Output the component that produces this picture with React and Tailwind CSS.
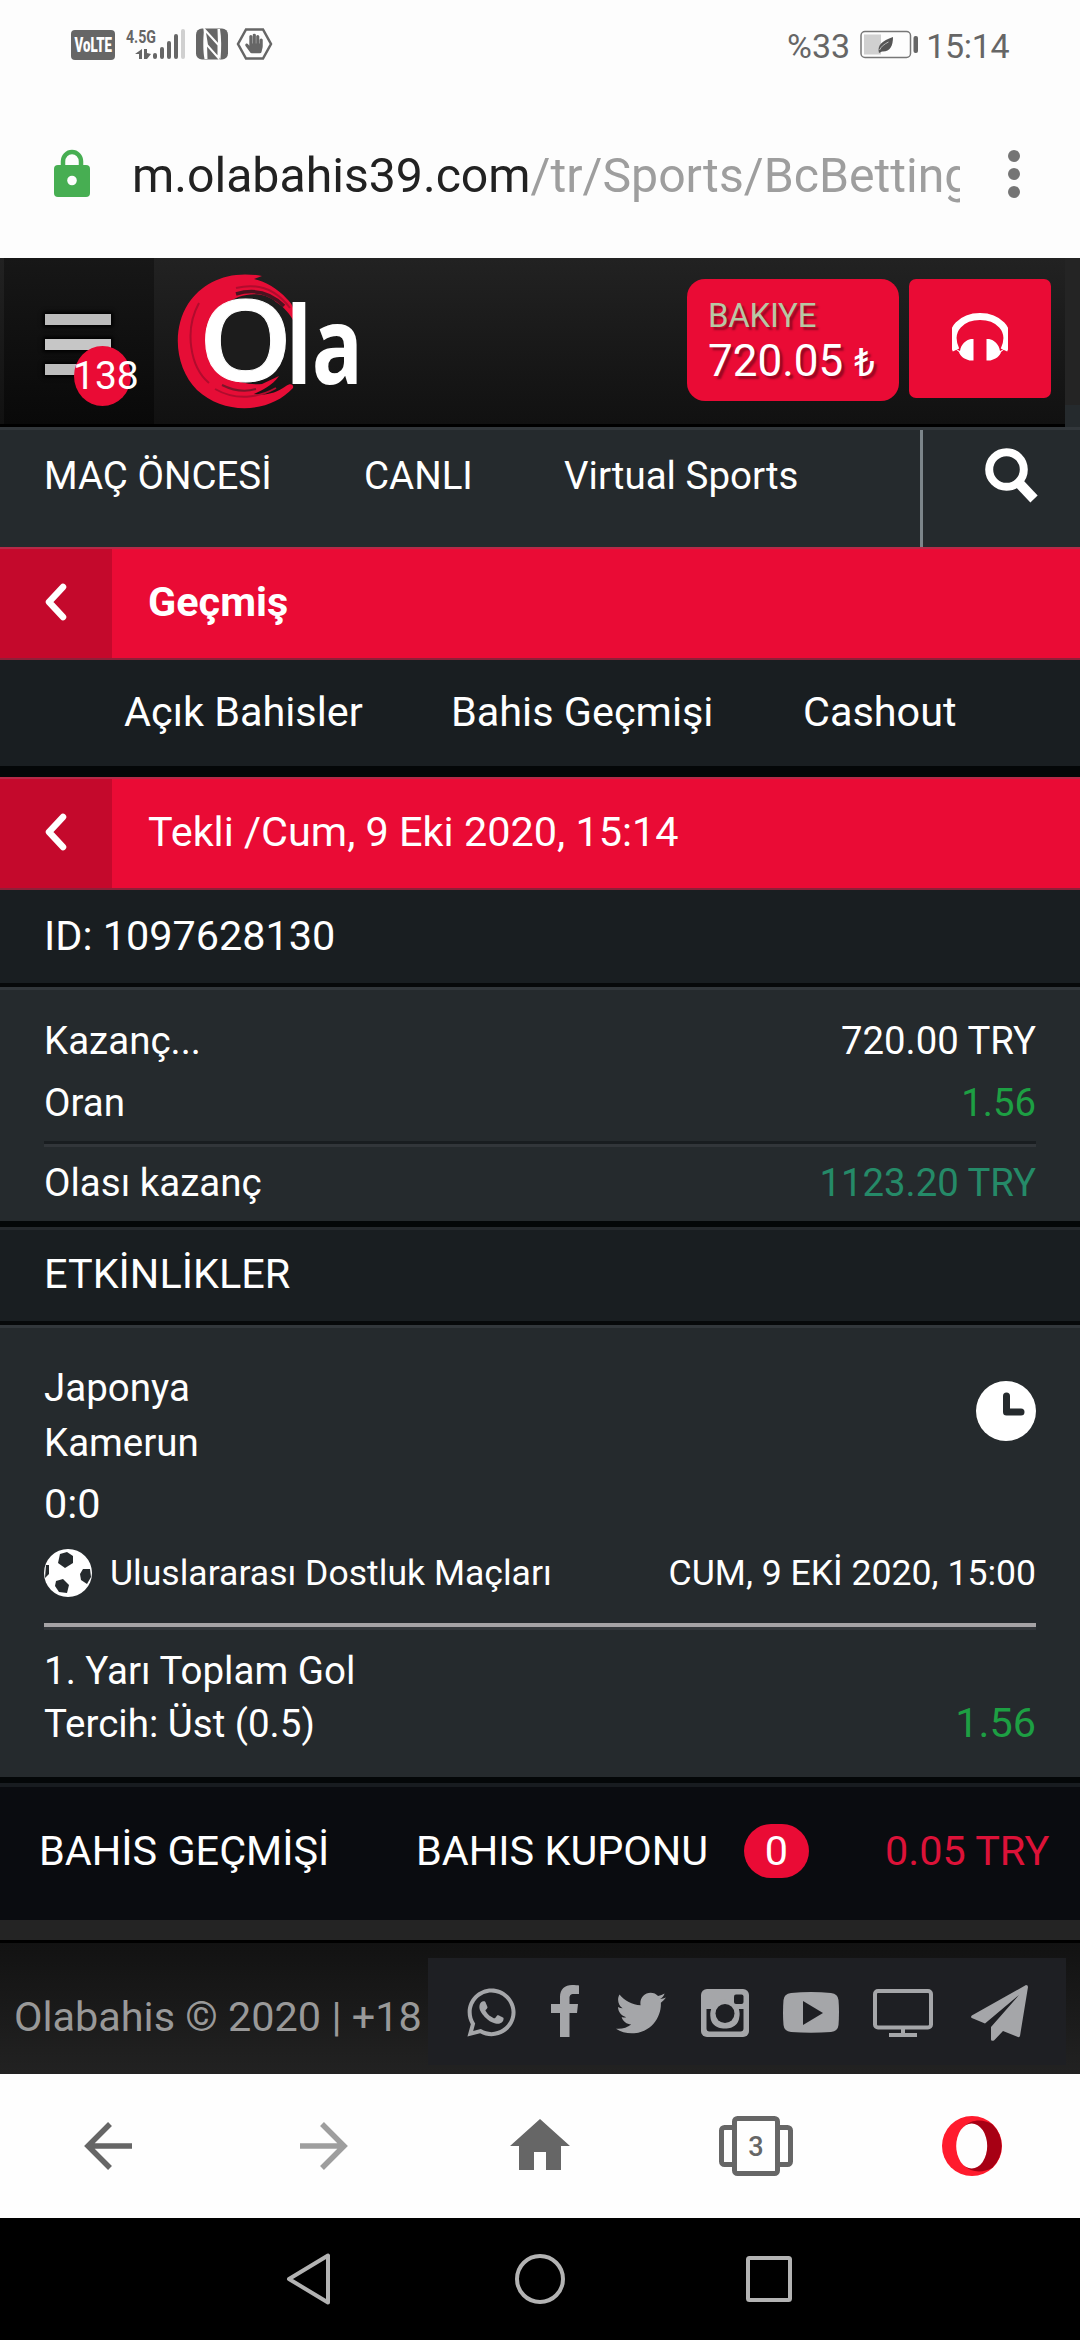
import { FaWhatsapp, FaTwitter, FaHandPaper, FaLeaf } from 'react-icons/fa';

const StatusBar = () => (
  <div className="flex h-[90px] items-center bg-[#fdfdfd] pl-[70px] text-[34px] leading-none text-[#666]">
    <svg width="202" height="36" viewBox="70 28 202 36" className="block overflow-visible">
      <rect x="71" y="31" width="44" height="30" rx="4" fill="#666" />
      <text x="74.5" y="53" fontSize="20" fontWeight="900" fill="#fff" textLength="37.5" lengthAdjust="spacingAndGlyphs">VoLTE</text>
      <text x="126" y="44" fontSize="19" fontWeight="700" fill="#666" textLength="30" lengthAdjust="spacingAndGlyphs">4.5G</text>
      {/* data arrows */}
      <path d="M142 50v10h-3v-5h-4zM144 50h3v4l4 1-4 5h-3z" fill="#666" />
      <rect x="153" y="54" width="4" height="6" rx="2" fill="#666" />
      <rect x="160" y="48" width="4" height="12" rx="2" fill="#666" />
      <rect x="167" y="42" width="4" height="18" rx="2" fill="#666" />
      <rect x="174" y="35" width="4" height="25" rx="2" fill="#666" />
      <rect x="181" y="30" width="4" height="30" rx="2" fill="#d0d0d0" />
      {/* nfc */}
      <rect x="196" y="29.5" width="32" height="31" rx="6" fill="#666" />
      <path d="M204.5 60c-1.500-8-1.500-19-.5-29.500L218 46l-.5-16h2.500c1.500 9 1.500 20 .5 30L207 45.500l.5 14.500z" fill="#fdfdfd" />
      <path d="M204.5 30.500L218.500 46v13L207 46z" fill="#666" stroke="#fdfdfd" strokeWidth="2" />
      <path d="M246 30.500h17l8 14.500-8 14.500h-17L238 45z" fill="none" stroke="#666" strokeWidth="2.5" />
      <FaHandPaper x="244" y="34.500" size={20} fill="#666" />
    </svg>
    <span className="mt-0.5 ml-[515px]">%33</span>
    <svg width="60" height="30" viewBox="857 31 60 30" className="ml-[9px] block">
      <rect x="859" y="32.5" width="49.5" height="26" rx="4" fill="none" stroke="#777" strokeWidth="1.5" />
      <rect x="862" y="35.5" width="17" height="20" fill="#d0d0d0" />
      <rect x="911.5" y="37" width="4.5" height="17" rx="2" fill="#666" />
      <path d="M877 54c-2-8 3-12 14-16 0 9-3 15-11 14.500l-2 1z" fill="#555" />
      <path d="M877.500 51c2-4 5-6 9-8" fill="none" stroke="#bbb" strokeWidth="1" />
    </svg>
    <span className="mt-0.5 ml-[7px] tracking-[-0.3px]">15:14</span>
  </div>
);

const AddressBar = () => (
  <div className="flex h-[168px] items-start bg-[#fdfdfd] pl-[54px]">
    <svg width="36" height="48" viewBox="0 0 36 48" className="mt-[59px] block">
      <path d="M9 20V12.500a9 9.500 0 0 1 18 0V20" fill="none" stroke="#47ae52" strokeWidth="4.5" />
      <rect y="16" width="36" height="32" rx="4" fill="#47ae52" />
      <circle cx="18" cy="31.5" r="4.8" fill="#fdfdfd" />
    </svg>
    <div className="mt-[57px] ml-[42px] w-[828px] overflow-hidden text-[48.2px] leading-[58px] whitespace-nowrap text-[#222]">
      m.olabahis39.com<span className="text-[#9e9e9e]">/tr/Sports/BcBetting</span>
    </div>
    <div className="mt-[60px] ml-12 flex flex-col gap-1.5">
      <i className="size-3 rounded-full bg-[#757575]" />
      <i className="size-3 rounded-full bg-[#757575]" />
      <i className="size-3 rounded-full bg-[#757575]" />
    </div>
  </div>
);

const Logo = () => (
  <svg width="200" height="150" viewBox="170 265 200 150" className="mt-[7px] ml-4 block overflow-visible">
    {/* brush swirl */}
    <path
      d="M262 276C230 270 203 281 188 304C171 331 176 369 197 390C225 416 270 413 293 388C294 384 290 383 286 386C276 393 266 396 254 394C262 390 272 386 279 376L262 384C240 386 220 376 212 355C206 335 212 318 226 304C240 293 262 290 276 302C284 307 290 314 294 322C295 311 293 304 287 299C277 288 266 282 254 279Z"
      fill="#e60d36"
    />
    <path d="M199 303C184 330 190 367 209 383M236 288C260 282 278 292 290 308M215 389C236 401 258 398 276 388" fill="none" stroke="#b00c2d" strokeWidth="2" />
    <path d="M236 294C256 288 272 294 284 306" fill="none" stroke="#4a1320" strokeWidth="3.5" />
    <path d="M222 385C236 392 246 392 256 389" fill="none" stroke="#7c1529" strokeWidth="2" />
    <ellipse cx="246" cy="340" rx="32" ry="36" fill="#1c1c1c" />
    <g fill="#fff" className="font-['Open_Sans']">
      <text x="198.500" y="381" fontSize="113" fontWeight="600" stroke="#fff" strokeWidth="1" textLength="94" lengthAdjust="spacingAndGlyphs">O</text>
      <text x="286" y="384" fontSize="108" fontWeight="700" textLength="77" lengthAdjust="spacingAndGlyphs">la</text>
    </g>
  </svg>
);

const Header = () => (
  <header className="flex h-[169px] bg-[#252a2d]">
    <div className="flex h-full w-[1065px] border-b-[3px] border-black bg-linear-to-b from-[#222] to-[#111]">
      <div className="ml-1 w-[150px] bg-linear-to-b from-[#171717] to-[#090909] pt-14 pl-[41px]">
        <div className="relative flex w-[66px] flex-col gap-3.5">
          <i className="h-[11px] bg-[#bcbcbc] shadow-[0_0_4px_2px_#000]" />
          <i className="h-[11px] bg-[#c6c6c6] shadow-[0_0_4px_2px_#000]" />
          <i className="h-[11px] bg-[#bcbcbc] shadow-[0_0_4px_2px_#000]" />
          <span className="absolute top-8 left-[29px] h-[60px] w-[57px] rounded-[50%] bg-[#ea0b35] text-[39px] leading-[60px] text-white -indent-px">138</span>
        </div>
      </div>
      <Logo />
      <div className="mt-[21px] ml-[317px] h-[122px] w-[212px] rounded-[18px] bg-[#ea0b35] pt-3.5 pl-[21px] whitespace-nowrap text-white [text-shadow:3px_3px_2px_rgba(0,0,0,0.35)]">
        <div className="text-[33px] leading-[46px] tracking-[-0.3px] text-[#b7c7a4]">BAKIYE</div>
        <div className="text-[44px] leading-[44px]">720.05 <span className="text-[38px]">₺</span></div>
      </div>
      <div className="mt-[21px] ml-2.5 flex h-[119px] w-[142px] justify-center rounded-[7px] bg-[#ea0b35] pt-[34px]">
        <svg width="56" height="49" viewBox="0 0 56 49" className="block">
          <path d="M4 37C-6 15 12 3.500 28 3.500S62 15 52 37" fill="none" stroke="#fff" strokeWidth="7" />
          <path d="M2 35l6 3c1-7 6-11 11-12h2.500v21.500h-4C12 46 8 43 7 39zM54 35l-6 3c-1-7-6-11-11-12h-2.500v21.500h4C44 46 48 43 49 39z" fill="#fff" />
        </svg>
      </div>
    </div>
    <div className="h-[147px] w-[15px] bg-[#242424]" />
  </header>
);

const MainNav = () => (
  <nav className="flex h-[120px] items-start border-t-[3px] border-[#32373b] bg-[#252a2d] pl-11 text-[38.5px] leading-[92px] text-white">
    <span className="w-[320px]">MAÇ ÖNCESİ</span>
    <span className="w-[200px]">CANLI</span>
    <span className="w-[356px]">Virtual Sports</span>
    <i className="h-full w-[3px] bg-[#7c858a]" />
    <svg width="54" height="55" viewBox="0 0 54 55" className="mt-[18px] ml-[62px] block">
      <circle cx="21.500" cy="21.500" r="17.300" fill="none" stroke="#fff" strokeWidth="8" />
      <path d="M33 34L49 51" stroke="#fff" strokeWidth="10" />
    </svg>
  </nav>
);

const RedBar = ({ children }) => (
  <div className="flex h-[113px] border-y-2 border-t-[#b52a48] border-b-[#8d2039] bg-[#ea0b35] text-[41.4px] leading-[107px] text-white">
    <div className="flex w-28 bg-[#c4092c] pt-[34px] pl-[44px]">
      <svg width="24" height="38" viewBox="0 0 24 38" className="block">
        <path d="M19 4L5 19l14 15" fill="none" stroke="#fff" strokeWidth="6.5" strokeLinejoin="round" strokeLinecap="round" />
      </svg>
    </div>
    <div className="pl-9">{children}</div>
  </div>
);

const Summary = () => (
  <section className="h-[234px] border-t-[3px] border-[#32373b] bg-[#252a2d] px-11 pt-5 text-[38.5px] text-white">
    <div className="flex justify-between leading-[62px]">
      <span>Kazanç...</span>
      <span className="text-[38.3px]">720.00 TRY</span>
    </div>
    <div className="flex justify-between leading-[62px]">
      <span>Oran</span>
      <span className="text-[38.3px] text-[#1d9f43]">1.56</span>
    </div>
    <div className="mt-[7px] h-1.5 border-t-[3px] border-[#191d20] bg-[#32363a]" />
    <div className="flex justify-between leading-[72px]">
      <span>Olası kazanç</span>
      <span className="text-[38.3px] text-[#258a68]">1123.20 TRY</span>
    </div>
  </section>
);

const FootballIcon = () => (
  <svg width="48" height="50" viewBox="0 0 48 50" className="block">
    <circle cx="24" cy="25" r="24" fill="#fff" />
    <g fill="#252a2d">
      <path d="M16 6l7-2 6 4v7l-8 5-7-5z" />
      <path d="M12 33l7-2 6 6-2 8-8-1-4-6z" />
      <path d="M39 21l7 0 1 8-4 7-6-4-1-6z" />
      <path d="M2 17l3 0 0 9-4 4z" />
    </g>
  </svg>
);

const EventPanel = () => (
  <section className="h-[452px] border-t-[3px] border-[#32373b] bg-[#252a2d] px-11 pt-8 text-[38.5px] text-white">
    <div className="flex justify-between">
      <div className="leading-[55px]">
        <div>Japonya</div>
        <div>Kamerun</div>
        <div className="text-[41.4px] leading-[68px]">0:0</div>
      </div>
      <svg width="60" height="60" viewBox="0 0 60 60" className="mt-[21px] block">
        <circle cx="30" cy="30" r="30" fill="#fff" />
        <path d="M30.500 15v16H45" fill="none" stroke="#252a2d" strokeWidth="7" strokeLinecap="round" strokeLinejoin="round" />
      </svg>
    </div>
    <div className="flex h-[70px] items-center text-[35.6px]">
      <FootballIcon />
      <span className="mt-0.5 ml-[18px]">Uluslararası Dostluk Maçları</span>
      <span className="mt-0.5 ml-auto">CUM, 9 EKİ 2020, 15:00</span>
    </div>
    <div className="mt-[15px] h-[7px] border-t-4 border-[#a5a3a5] bg-[#33373b]" />
    <div className="mt-[14px] leading-[53px]">1. Yarı Toplam Gol</div>
    <div className="flex justify-between leading-[53px]">
      <span>Tercih: Üst (0.5)</span>
      <span className="text-[41.4px] text-[#1d9f43]">1.56</span>
    </div>
  </section>
);

const BetslipBar = () => (
  <div className="flex h-[137px] items-center border-t-4 border-[#181c20] bg-[#0a0c10] pb-[5px] pl-[39px] text-[41.4px] text-white">
    <span className="w-[377px]">BAHİS GEÇMİŞİ</span>
    <span className="w-[328px]">BAHIS KUPONU</span>
    <span className="h-[54px] w-[65px] rounded-full bg-[#ea0b35] text-center leading-[54px]">0</span>
    <span className="ml-[76px] text-[#dc1238]">0.05 TRY</span>
  </div>
);

const Footer = () => (
  <footer className="flex h-[131px] bg-linear-to-b from-[#121212] to-[#222] text-[#999]">
    <div className="w-[428px] pt-[50px] pl-3.5 text-[41.4px] leading-[48px] whitespace-nowrap">Olabahis © 2020 | +18</div>
    <div className="mt-[15px] flex h-[107px] w-[638px] bg-[#1e1f23] text-[#a5a6a9]">
      <FaWhatsapp className="mt-[27px] ml-9 block size-[55px]" />
      <svg width="28" height="52" viewBox="0 0 28 52" className="mt-[27px] ml-8 block" fill="currentColor">
        <path d="M28 .5V9h-5c-4 0-4.500 2-4.500 4.500V19H27l-1 9h-7.500v24H9V28H0v-9h9v-7C9 4 14 0 21 0c3 0 6 .3 7 .5z" />
      </svg>
      <FaTwitter className="mt-[30px] ml-[37px] block size-[50px]" />
      <svg width="48" height="48" viewBox="0 0 48 48" className="mt-[31px] ml-[35px] block">
        <rect width="48" height="48" rx="6" fill="currentColor" />
        <path d="M5.500 20h5c-4 14 4 19.500 13.500 19.500S41 34 37.500 20h5v19.500q0 3-3 3h-31q-3 0-3-3z" fill="#1e1f23" />
        <circle cx="24" cy="24.5" r="14.5" fill="currentColor" />
        <circle cx="24" cy="24.5" r="9.5" fill="#1e1f23" />
        <rect x="33" y="5.5" width="9.5" height="9.5" rx="2" fill="#1e1f23" />
      </svg>
      <svg width="56" height="41" viewBox="0 0 56 41" className="mt-[34px] ml-[34px] block">
        <path d="M8 1Q28-1 48 1q7 1 7.500 7 1 12 0 25-.5 6-7.500 7-20 1.500-40 0-7-1-7.500-7-1-12 0-25Q1 2 8 1z" fill="currentColor" />
        <path d="M20 9v24l20-12z" fill="#1e1f23" />
      </svg>
      <svg width="60" height="48" viewBox="0 0 60 48" className="mt-[31px] ml-[34px] block">
        <rect x="2" y="2" width="56" height="36.5" rx="3" fill="none" stroke="currentColor" strokeWidth="4" />
        <path d="M28 39h4v5h12v4H16v-4h12z" fill="currentColor" />
      </svg>
      <svg width="57" height="56" viewBox="0 0 57 56" className="mt-[27px] ml-[38px] block">
        <path d="M55 0q2 0 2 2l-8 49q-.5 1.500-2 1L32 46l-9 9.500q-3 1-3-1V42L48 10 14 38.500.8 33q-1.500-1 0-2.500z" fill="currentColor" />
      </svg>
    </div>
  </footer>
);

const BrowserToolbar = () => (
  <div className="grid h-36 grid-cols-5 place-items-center bg-[#fefefe]">
    <svg width="48" height="48" viewBox="0 0 48 48" className="block" fill="none" stroke="#666" strokeWidth="5.5">
      <path d="M26 2L4 24l22 22M3 24h45" />
    </svg>
    <svg width="48" height="48" viewBox="0 0 48 48" className="block" fill="none" stroke="#9e9e9e" strokeWidth="5.5">
      <path d="M22 2l22 22-22 22M45 24H0" />
    </svg>
    <svg width="60" height="60" viewBox="0 0 60 60" className="block">
      <path d="M30 3L0 30h9v24h15V36h12v18h15V30h9z" fill="#666" />
    </svg>
    <svg width="74" height="60" viewBox="719 2116 74 60" className="block" fill="none" stroke="#666" strokeWidth="5">
      <rect x="721.5" y="2127.5" width="69" height="37" rx="3" />
      <rect x="734.5" y="2118.5" width="43" height="55" rx="3" fill="#fefefe" />
      <text x="756" y="2156" textAnchor="middle" fontSize="27" fontWeight="500" fill="#666" stroke="none">3</text>
    </svg>
    <svg width="60" height="60" viewBox="0 0 60 60" className="block">
      <circle cx="30" cy="30" r="30" fill="#ff1b2d" />
      <path d="M22 11C29 3 41 3 50 8A30 30 0 0 1 50 52C41 57 29 57 22 49z" fill="#a70014" />
      <ellipse cx="29.7" cy="30" rx="15.5" ry="22.5" fill="#fefefe" />
    </svg>
  </div>
);

const AndroidNav = () => (
  <div className="flex h-[122px] items-center bg-black pl-[286px]">
    <svg width="45" height="52" viewBox="0 0 45 52" className="block">
      <path d="M42 2.500v47L3 26z" fill="none" stroke="#b3b3b3" strokeWidth="4" strokeLinejoin="round" />
    </svg>
    <svg width="50" height="50" viewBox="0 0 50 50" className="ml-[184px] block">
      <circle cx="25" cy="25" r="23" fill="none" stroke="#b3b3b3" strokeWidth="4" />
    </svg>
    <svg width="46" height="46" viewBox="0 0 46 46" className="ml-[181px] block">
      <rect x="2" y="2" width="42" height="42" rx="1.5" fill="none" stroke="#b3b3b3" strokeWidth="4" />
    </svg>
  </div>
);

export default function App() {
  return (
    <div className="w-[1080px] overflow-hidden bg-black font-[Roboto,sans-serif]">
      <StatusBar />
      <AddressBar />
      <Header />
      <MainNav />
      <RedBar>
        <b>Geçmiş</b>
      </RedBar>
      <div className="flex h-[106px] bg-[#191e21] pl-[124px] text-[41.4px] leading-[105px] text-white">
        <span className="w-[327px]">Açık Bahisler</span>
        <span className="w-[352px]">Bahis Geçmişi</span>
        <span>Cashout</span>
      </div>
      <div className="h-[11px] bg-[#040708]" />
      <RedBar>Tekli /Cum, 9 Eki 2020, 15:14</RedBar>
      <div className="h-[97px] border-b-4 border-[#07090a] bg-[#191e21] pl-11 text-[41.4px] leading-[92px] text-white">ID: 1097628130</div>
      <Summary />
      <div className="h-1.5 bg-[#040708]" />
      <div className="h-[98px] border-t-[3px] border-b-4 border-t-[#25292d] border-b-[#07090a] bg-[#191e21] pl-11 text-[41.4px] leading-[88px] text-white">ETKİNLİKLER</div>
      <EventPanel />
      <div className="h-1.5 bg-[#040708]" />
      <BetslipBar />
      <div className="h-[23px] border-b-[3px] border-black bg-[#242424]" />
      <Footer />
      <BrowserToolbar />
      <AndroidNav />
    </div>
  );
}
